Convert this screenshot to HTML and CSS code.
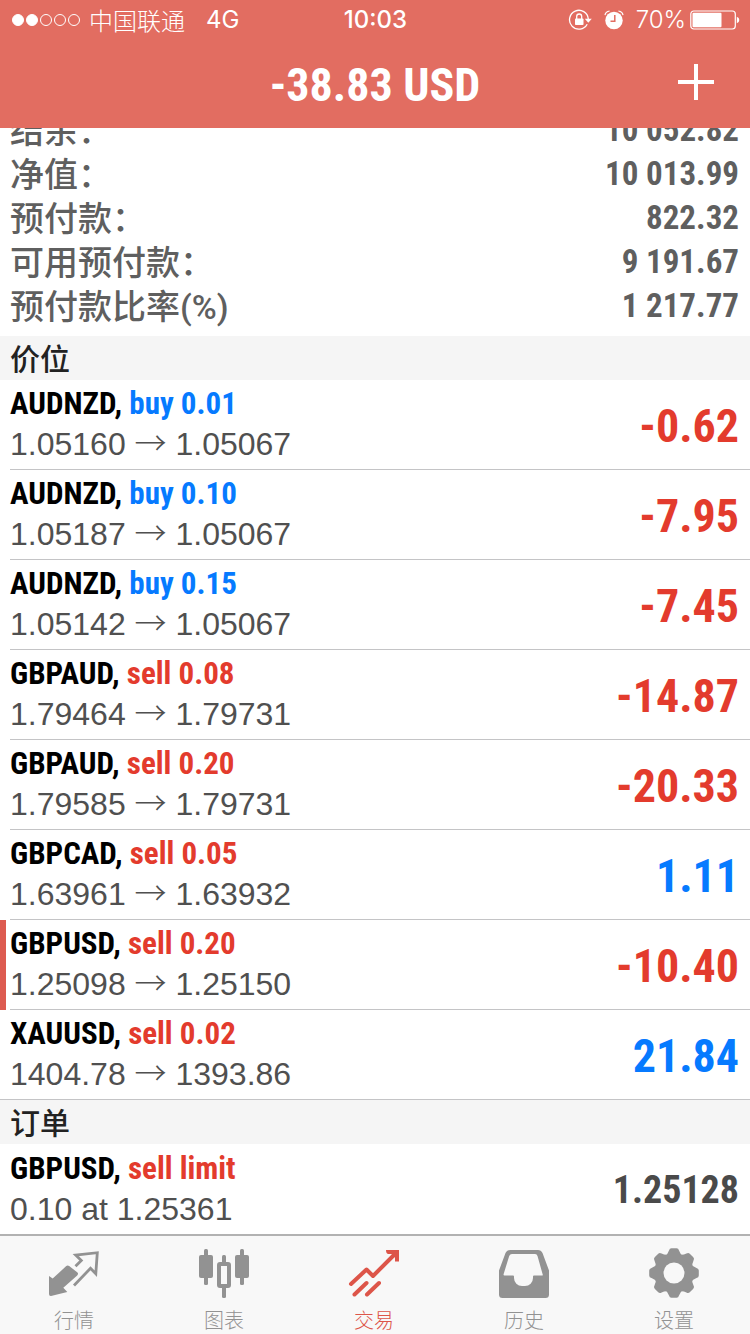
FILE: index.html
```
<!DOCTYPE html>
<html lang="zh-CN">
<head>
<meta charset="utf-8">
<meta name="viewport" content="width=device-width, initial-scale=1">
<title>交易</title>
<link rel="stylesheet" href="styles.css">
</head>
<body>
<div class="app">
  <header class="header">
    <div class="status">
      <div class="status-side">
        <svg class="signal" width="70" height="14" viewBox="0 0 70 14" aria-hidden="true">
          <g stroke="#fff" stroke-width="1"><circle cx="7" cy="7" r="5.5" fill="#fff"/><circle cx="21" cy="7" r="5.5" fill="#fff"/><g fill="none"><circle cx="35" cy="7" r="5.5"/><circle cx="49" cy="7" r="5.5"/><circle cx="63" cy="7" r="5.5"/></g></g>
        </svg>
        <span class="carrier">中国联通</span>
        <span class="network">4G</span>
      </div>
      <span class="time">10:03</span>
      <div class="status-side status-right">
        <svg class="lock" width="24" height="22" viewBox="0 0 24 22" aria-hidden="true">
          <path d="M19.2 15.200A9.400 9.400 0 1 1 20.300 10" fill="none" stroke="#fff" stroke-width="1.3"/>
          <path d="M16.800 9.800h7l-3.500 4z" fill="#fff"/>
          <rect x="7" y="9.500" width="8.500" height="6.500" rx=".8" fill="#fff"/>
          <path d="M8.700 10V7.500a2.500 2.500 0 0 1 5 0V10" fill="none" stroke="#fff" stroke-width="1.3"/>
        </svg>
        <svg class="alarm" width="20" height="20" viewBox="0 0 20 20" aria-hidden="true">
          <circle cx="10" cy="10.500" r="8.700" fill="#fff"/>
          <path d="M1 5.200Q1.500 1.500 5.600 1M19 5.200Q18.500 1.500 14.400 1" fill="none" stroke="#fff" stroke-width="1.2"/>
          <path d="M10.800 5v6.200H6.500" fill="none" stroke="#e26d61" stroke-width="1.500"/>
        </svg>
        <span class="charge">70%</span>
        <svg class="battery" width="50" height="20" viewBox="0 0 50 20" aria-hidden="true">
          <rect x=".8" y="1" width="44.500" height="18" rx="3" fill="none" stroke="#fff" stroke-width="1.2"/>
          <rect x="2.500" y="2.800" width="29" height="14.500" rx="1" fill="#fff"/>
          <path d="M46.800 6.800q2.500 1 2.500 3.200t-2.500 3.200z" fill="#fff"/>
        </svg>
      </div>
    </div>
    <div class="titlebar">
      <h1 class="title">-38.83 USD</h1>
      <button class="add" type="button" aria-label="+">
        <svg width="36" height="36" viewBox="0 0 36 36" aria-hidden="true"><path d="M18 0v36M0 18h36" stroke="#fff" stroke-width="4"/></svg>
      </button>
    </div>
  </header>

  <main class="content">
    <dl class="summary">
      <div class="summary-row"><dt>结余：</dt><dd>10 052.82</dd></div>
      <div class="summary-row"><dt>净值：</dt><dd>10 013.99</dd></div>
      <div class="summary-row"><dt>预付款：</dt><dd>822.32</dd></div>
      <div class="summary-row"><dt>可用预付款：</dt><dd>9 191.67</dd></div>
      <div class="summary-row"><dt>预付款比率(%)</dt><dd>1 217.77</dd></div>
    </dl>

    <h2 class="section">价位</h2>
    <ul class="list">
      <li class="item"><div class="body"><div class="info"><p class="deal">AUDNZD, <span class="blue">buy 0.01</span></p><p class="price">1.05160 <span class="arrow">→</span> 1.05067</p></div><span class="amount red">-0.62</span></div></li>
      <li class="item"><div class="body"><div class="info"><p class="deal">AUDNZD, <span class="blue">buy 0.10</span></p><p class="price">1.05187 <span class="arrow">→</span> 1.05067</p></div><span class="amount red">-7.95</span></div></li>
      <li class="item"><div class="body"><div class="info"><p class="deal">AUDNZD, <span class="blue">buy 0.15</span></p><p class="price">1.05142 <span class="arrow">→</span> 1.05067</p></div><span class="amount red">-7.45</span></div></li>
      <li class="item"><div class="body"><div class="info"><p class="deal">GBPAUD, <span class="red">sell 0.08</span></p><p class="price">1.79464 <span class="arrow">→</span> 1.79731</p></div><span class="amount red">-14.87</span></div></li>
      <li class="item"><div class="body"><div class="info"><p class="deal">GBPAUD, <span class="red">sell 0.20</span></p><p class="price">1.79585 <span class="arrow">→</span> 1.79731</p></div><span class="amount red">-20.33</span></div></li>
      <li class="item"><div class="body"><div class="info"><p class="deal">GBPCAD, <span class="red">sell 0.05</span></p><p class="price">1.63961 <span class="arrow">→</span> 1.63932</p></div><span class="amount blue">1.11</span></div></li>
      <li class="item marked"><div class="body"><div class="info"><p class="deal">GBPUSD, <span class="red">sell 0.20</span></p><p class="price">1.25098 <span class="arrow">→</span> 1.25150</p></div><span class="amount red">-10.40</span></div></li>
      <li class="item last"><div class="body"><div class="info"><p class="deal">XAUUSD, <span class="red">sell 0.02</span></p><p class="price">1404.78 <span class="arrow">→</span> 1393.86</p></div><span class="amount blue">21.84</span></div></li>
    </ul>

    <h2 class="section">订单</h2>
    <ul class="list">
      <li class="item"><div class="body plain"><div class="info"><p class="deal">GBPUSD, <span class="red">sell limit</span></p><p class="price">0.10 at 1.25361</p></div><span class="amount order">1.25128</span></div></li>
    </ul>
  </main>

  <nav class="tabs">
    <a class="tab" href="#quotes">
      <svg width="52" height="52" viewBox="0 0 52 52" aria-hidden="true">
        <path d="M1 26l3.700 2.600L18 16.300q1.500-1.300 3.200-.2L29.200 22.300q1.700 1.500 0 3.200L15.300 37.700l4 4.300L3 45.900q-2 .2-2-1.900z" fill="#929292"/>
        <path d="M27.500 16.300l5.800-5.800-5.600-5.500 21.600-2.300-1.500 21-5.300-5.400L26 35.500" fill="none" stroke="#929292" stroke-width="2.800"/>
      </svg>
      <span>行情</span>
    </a>
    <a class="tab" href="#charts">
      <svg width="52" height="52" viewBox="0 0 52 52" aria-hidden="true">
        <g fill="#929292"><rect x="1" y="5" width="14" height="23" rx="2"/><rect x="6" y="-1" width="4" height="36" rx="1.500"/><rect x="37" y="5" width="14" height="23" rx="2"/><rect x="42" y="-1" width="4" height="36" rx="1.500"/><rect x="24" y="5" width="4" height="10" rx="1.500"/><rect x="24" y="36" width="4" height="12" rx="1.500"/></g>
        <rect x="21" y="14" width="10" height="22" rx="1" fill="none" stroke="#929292" stroke-width="4"/>
      </svg>
      <span>图表</span>
    </a>
    <a class="tab current" href="#trade" aria-current="page">
      <svg width="52" height="52" viewBox="0 0 52 52" aria-hidden="true">
        <path d="M3 34l15.500-14.500 6.500 6.500L46.500 4.500M6.500 44.500l12-11.500M19 44.500l12-11.500" fill="none" stroke="#dd5549" stroke-width="4" stroke-linecap="round" stroke-linejoin="round"/>
        <path d="M38 0h13v11.500h-4V7.500L43.500 4H40q-2-.5-2-4z" fill="#dd5549"/>
      </svg>
      <span>交易</span>
    </a>
    <a class="tab" href="#history">
      <svg width="52" height="52" viewBox="0 0 52 52" aria-hidden="true">
        <path fill-rule="evenodd" d="M12 0H40q3 0 4.500 3L51 20.500V44.500q0 3.500-3.500 3.500h-43Q1 48 1 44.500V20.500L7.500 3Q9 0 12 0zM14 4q-2 0-2.800 2L5.500 24.500q0 1 1 1H15q1 0 1 1v1.500a8 8 0 0 0 8 8h3a8 8 0 0 0 8-8v-1.500q0-1 1-1H44q1 0 .7-1L39.500 6Q39 4 37 4z" fill="#929292"/>
      </svg>
      <span>历史</span>
    </a>
    <a class="tab" href="#settings">
      <svg width="52" height="52" viewBox="0 0 52 52" aria-hidden="true">
        <defs><path id="tooth" d="M16.500 6.500Q20 4 21 0.500Q21.500-1.800 23.500-1.800h5Q30.500-1.800 31 .5Q32 4 35.500 6.500z"/></defs>
        <mask id="hole"><rect x="-2" y="-4" width="56" height="58" fill="#fff"/><circle cx="26" cy="23" r="10.500" fill="#000"/></mask>
        <g fill="#929292" mask="url(#hole)"><circle cx="26" cy="23" r="19.500"/><use href="#tooth"/><use href="#tooth" transform="rotate(45 26 23)"/><use href="#tooth" transform="rotate(90 26 23)"/><use href="#tooth" transform="rotate(135 26 23)"/><use href="#tooth" transform="rotate(180 26 23)"/><use href="#tooth" transform="rotate(225 26 23)"/><use href="#tooth" transform="rotate(270 26 23)"/><use href="#tooth" transform="rotate(315 26 23)"/></g>
      </svg>
      <span>设置</span>
    </a>
  </nav>
</div>
</body>
</html>
```
FILE: styles.css
```
* { box-sizing: border-box; }
body, h1, h2, p, ul, dl, dd { margin: 0; padding: 0; }
body {
  background: #fff;
  font-family: "Liberation Sans", "Noto Sans CJK SC", sans-serif;
}
.app {
  display: flex;
  flex-direction: column;
  height: 100vh;
}

.header {
  flex: none;
  position: relative;
  z-index: 1;
  background: #e26d61;
  color: #fff;
}
.status {
  display: flex;
  align-items: center;
  height: 40px;
  padding: 0 10px 0 11px;
  font: 24px/40px Inter, "Noto Sans CJK SC", sans-serif;
}
.status-side {
  flex: 1;
  display: flex;
  align-items: center;
}
.status-right { justify-content: flex-end; }
.carrier {
  margin-left: 8px;
  font-family: "Noto Sans CJK SC", sans-serif;
  font-weight: 300;
  line-height: 38px;
}
.network { margin-left: 21px; }
.time { font-weight: 500; }
.alarm { margin-left: 12px; }
.charge { margin: 0 4px 0 12px; font-weight: 300; }
.titlebar {
  display: grid;
  grid-template-columns: 1fr auto 1fr;
  align-items: center;
  height: 88px;
  padding: 0 36px;
}
.title {
  grid-column: 2;
  padding-top: 2px;
  font: bold 46px/86px "Roboto Condensed", "Liberation Sans Narrow", sans-serif;
}
.add {
  justify-self: end;
  display: flex;
  padding: 0 0 4px;
  border: 0;
  background: none;
}

.content {
  flex: 1;
  min-height: 0;
  overflow: hidden;
}
.summary {
  margin-top: -19px;
  padding: 0 11px 7px 10px;
  color: #5f5f5f;
}
.summary-row {
  display: flex;
  justify-content: space-between;
  height: 44px;
  font: bold 33px/42px "Roboto Condensed", "Liberation Sans Narrow", sans-serif;
}
.summary-row dt {
  font: 500 34px/44px Roboto, "Noto Sans CJK SC", sans-serif;
}
.section {
  height: 44px;
  padding: 0 10px;
  background: #f5f5f5;
  color: #222;
  font: 500 30px/42px "Noto Sans CJK SC", sans-serif;
}
.list { list-style: none; }
.item { padding-left: 10px; }
.marked {
  padding-left: 4px;
  border-left: 6px solid #dd5b50;
}
.body {
  display: flex;
  align-items: center;
  justify-content: space-between;
  height: 90px;
  padding-right: 11px;
  border-bottom: 1px solid #c4c4c6;
}
.plain { border-bottom: 0; }
.last {
  padding-left: 0;
  border-bottom: 1px solid #c4c4c6;
}
.last .body {
  height: 89px;
  padding-left: 10px;
  border-bottom: 0;
}
.info { padding-bottom: 1px; }
.deal {
  color: #000;
  font: bold 31px/40px "Roboto Condensed", "Liberation Sans Narrow", sans-serif;
}
.price {
  color: #505050;
  font-size: 32px;
  line-height: 40px;
}
.arrow {
  font-family: "Noto Sans CJK SC", sans-serif;
  font-weight: 300;
  line-height: 1;
}
.amount {
  padding-top: 2px;
  font: bold 46px/54px "Roboto Condensed", "Liberation Sans Narrow", sans-serif;
}
.red { color: #e33b2d; }
.blue { color: #067aff; }
.order { font-size: 38px; color: #4a4a4a; }

.tabs {
  flex: none;
  display: flex;
  height: 100px;
  border-top: 2px solid #b2b2b2;
  background: #f8f8f8;
}
.tab {
  flex: 1;
  display: flex;
  flex-direction: column;
  align-items: center;
  padding: 14px 2px 0 0;
  color: #929292;
  font: 300 20px/28px "Noto Sans CJK SC", sans-serif;
  text-decoration: none;
}
.tab svg { overflow: visible; margin-bottom: 4px; }
.current { color: #dd5549; }
```
